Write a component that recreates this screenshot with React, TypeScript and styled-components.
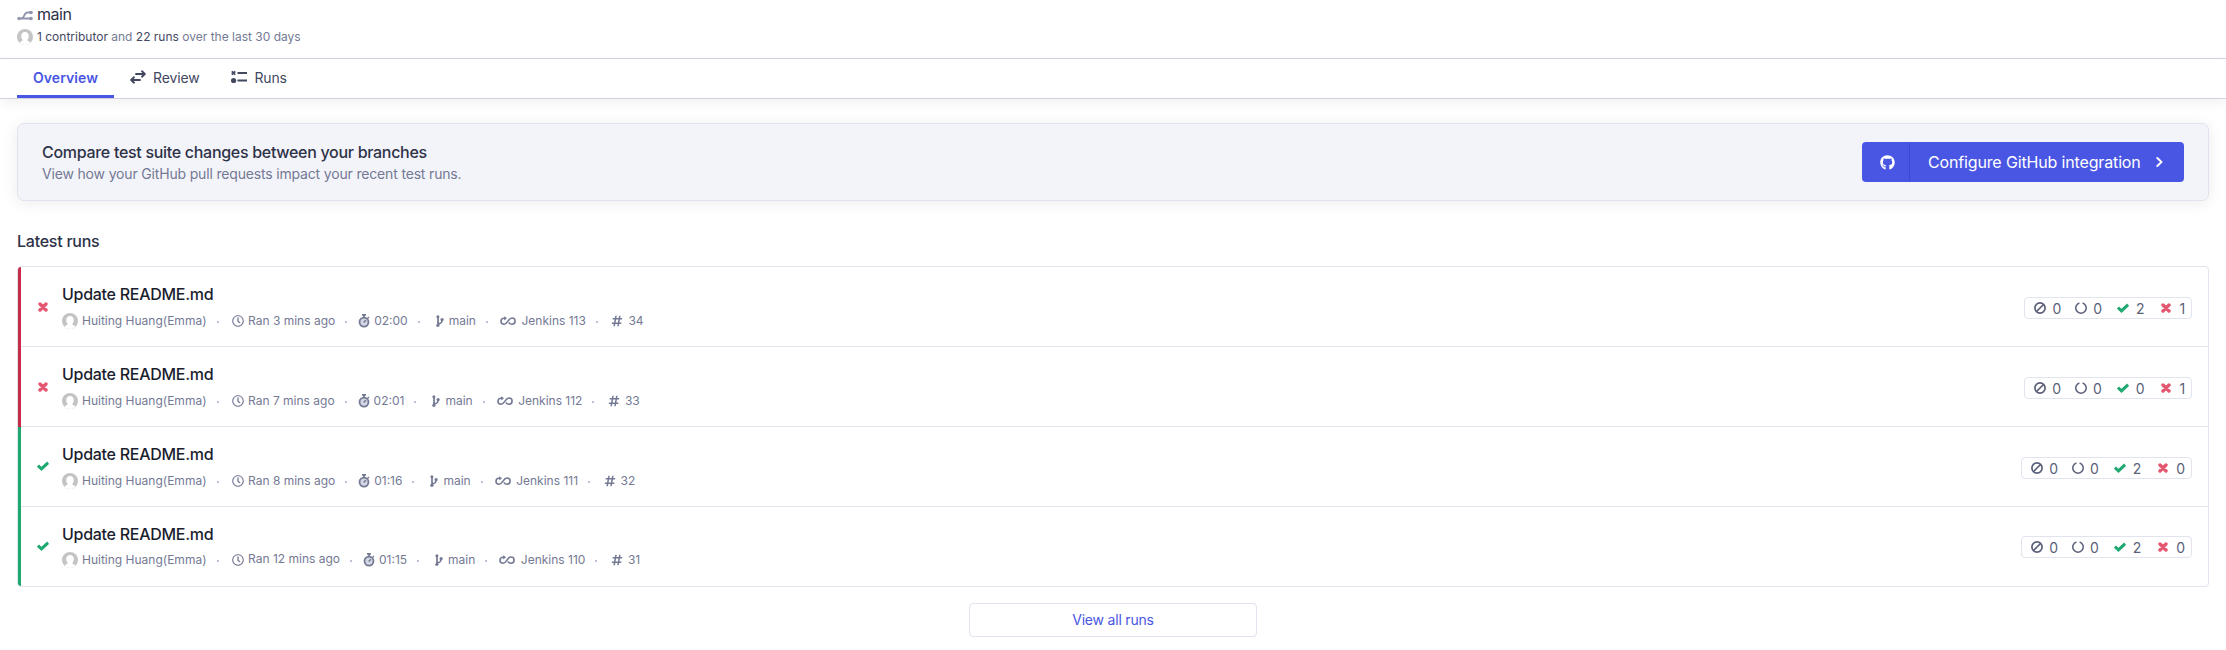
import React from "react";
import styled, { createGlobalStyle } from "styled-components";
import { FaRegClock, FaHashtag, FaGithub } from "react-icons/fa";

const GlobalStyle = createGlobalStyle`
  *, *::before, *::after { box-sizing: border-box; }
  body {
    margin: 0;
    background: #fff;
    color: #2e3247;
    font-family: Inter, "Liberation Sans", sans-serif;
    font-size: 14px;
  }
  svg { display: block; flex: none; }
`;

const Page = styled.div`
  min-height: 650px;
  overflow: hidden;
`;

const Header = styled.header`
  height: 59px;
  padding: 4px 17px 0;
  border-bottom: 1px solid #d0d2e0;
`;

const BranchTitle = styled.h1`
  display: flex;
  align-items: center;
  gap: 4px;
  margin: 0;
  height: 20px;
  font-size: 16px;
  font-weight: 400;
  letter-spacing: -0.45px;
  color: #2e3247;
  svg { margin-top: 2px; }
`;

const Contributors = styled.div`
  display: flex;
  align-items: center;
  gap: 4px;
  height: 25px;
  font-size: 12px;
  color: #747994;
  strong { font-weight: 400; color: #434861; }
`;

const Tabs = styled.nav`
  display: flex;
  height: 40px;
  padding-left: 17px;
  border-bottom: 1px solid #d0d2e0;
  box-shadow: 0 4px 12px rgba(0, 0, 0, 0.06);
`;

const Tab = styled.a<{ $active?: boolean }>`
  display: flex;
  align-items: center;
  gap: 7px;
  height: 39px;
  padding: 0 16px 3px;
  font-size: 14px;
  letter-spacing: ${(p) => (p.$active ? 0.07 : -0.15)}px;
  font-weight: ${(p) => (p.$active ? 600 : 400)};
  color: ${(p) => (p.$active ? "#4956e3" : "#434861")};
  box-shadow: ${(p) => (p.$active ? "inset 0 -3px #4956e3" : "none")};
`;

const Content = styled.main`
  padding: 24px 17px 0;
`;

const Banner = styled.section`
  display: flex;
  align-items: center;
  justify-content: space-between;
  height: 78px;
  padding: 0 24px;
  border: 1px solid #e1e3ed;
  border-radius: 7px;
  background: #f3f4fa;
  box-shadow: 0 2px 16px rgba(0, 0, 0, 0.08);
`;

const BannerTitle = styled.h2`
  margin: 0;
  font-size: 16px;
  line-height: 22px;
  font-weight: 500;
  letter-spacing: -0.3px;
  color: #2e3247;
`;

const BannerText = styled.p`
  margin: 0;
  font-size: 14px;
  line-height: 21px;
  letter-spacing: -0.17px;
  color: #747994;
`;

const ConfigureButton = styled.button`
  display: flex;
  align-items: center;
  width: 322px;
  height: 40px;
  padding: 0;
  border: 0;
  border-radius: 4px;
  background: #4956e3;
  color: #fff;
  font: 400 16px Inter, "Liberation Sans", sans-serif;
  letter-spacing: -0.15px;
`;

const ButtonIcon = styled.span`
  display: grid;
  place-items: center;
  width: 48px;
  height: 38px;
  padding-left: 3px;
  border-right: 1px solid #3b48cf;
`;

const ButtonLabel = styled.span`
  display: flex;
  flex: 1;
  align-items: center;
  justify-content: space-between;
  padding: 0 21px 0 18px;
`;

const SectionTitle = styled.h2`
  margin: 29px 0 0;
  height: 36px;
  font-size: 16px;
  line-height: 22px;
  font-weight: 500;
  letter-spacing: -0.25px;
  color: #2e3247;
`;

const RunList = styled.div`
  height: 321px;
  border: 1px solid #e1e3ed;
  border-radius: 4px;
  overflow: hidden;
`;

const RunRow = styled.article<{ $failed: boolean; $last: boolean }>`
  display: flex;
  align-items: flex-start;
  height: 80px;
  border-left: 3px solid ${(p) => (p.$failed ? "#c62b49" : "#1fa971")};
  padding-right: 16px;
  box-shadow: ${(p) => (p.$last ? "none" : "inset 0 -1px #e1e3ed")};
`;

const RunStatus = styled.span<{ $failed: boolean }>`
  display: grid;
  justify-items: center;
  width: 41px;
  padding: ${(p) => (p.$failed ? "35px" : "34px")} 0 0 3px;
`;

const RunBody = styled.div`
  flex: 1;
  padding-top: 15px;
`;

const RunTitle = styled.h3`
  margin: 0;
  height: 24px;
  line-height: 24px;
  font-size: 16px;
  font-weight: 500;
  letter-spacing: -0.28px;
  color: #1b1e2e;
`;

const Meta = styled.div<{ $last: boolean }>`
  display: flex;
  align-items: center;
  height: 20px;
  margin-top: ${(p) => (p.$last ? 4 : 5)}px;
  font-size: 12px;
  line-height: 20px;
  color: #747994;
`;

const MetaItem = styled.span<{ $gap: number; $lift?: number }>`
  display: flex;
  align-items: center;
  gap: ${(p) => p.$gap}px;
  span { margin-top: ${(p) => -2 * (p.$lift ?? 0)}px; }
`;

const Dot = styled.i<{ $after: number }>`
  width: 2px;
  height: 2px;
  margin: 1px ${(p) => p.$after}px 0 10px;
  border-radius: 50%;
  background: #a9adc4;
`;

const Stats = styled.div<{ $last: boolean }>`
  display: flex;
  align-items: center;
  height: 22px;
  margin-top: ${(p) => (p.$last ? 29 : 30)}px;
  padding: 0 6px 0 9px;
  border: 1px solid #e1e3ed;
  border-radius: 4px;
  font-size: 14px;
  letter-spacing: -0.1px;
  color: #5a5f7a;
`;

const Stat = styled.span<{ $gap: number; $before?: number }>`
  display: flex;
  align-items: center;
  gap: ${(p) => p.$gap}px;
  margin-left: ${(p) => p.$before ?? 0}px;
`;

const ViewAll = styled.button`
  display: block;
  width: 288px;
  height: 34px;
  margin: 16px auto 0;
  padding: 0 0 1px;
  border: 1px solid #e1e3ed;
  border-radius: 4px;
  background: #fff;
  color: #4956e3;
  font: 400 14px Inter, "Liberation Sans", sans-serif;
  letter-spacing: -0.2px;
`;

const Avatar = () => (
  <svg width="16" height="16" viewBox="0 0 16 16">
    <defs>
      <clipPath id="avatar-clip"><circle cx="8" cy="8" r="8" /></clipPath>
    </defs>
    <g clipPath="url(#avatar-clip)">
      <rect width="16" height="16" fill="#c4c4c4" />
      <path d="M8 3c2.400 0 3.800 1.700 3.800 4.100 0 1.600-.6 3-1.600 3.900.3 1 2.600 1.300 3.600 2.900V16H2.200v-2.100c1-1.600 3.300-1.900 3.600-2.900-1-.9-1.600-2.300-1.600-3.900C4.200 4.700 5.600 3 8 3z" fill="#fff" />
    </g>
  </svg>
);

const Cross = () => (
  <svg width="10" height="10" viewBox="0 0 10 10" stroke="#e45770" strokeWidth="3.400" strokeLinecap="round">
    <path d="m2 2 6 6m0-6L2 8" />
  </svg>
);

const Check = () => (
  <svg width="12" height="10" viewBox="0 0 12 10" fill="none" stroke="#1fa971" strokeWidth="3">
    <path d="m.9 4.500 3.600 3.400 6.600-6.200" />
  </svg>
);

const Skipped = () => (
  <svg width="12" height="12" viewBox="0 0 12 12" fill="none" stroke="currentColor" strokeWidth="1.700">
    <circle cx="6" cy="6" r="5.100" />
    <path d="M2.500 9.500l7-7" />
  </svg>
);

const BranchWide = () => (
  <svg width="16" height="12" viewBox="0 0 16 12" fill="none" stroke="#9095ad" strokeWidth="1.900">
    <path d="M2 9.500h12M4 9.500c4 0 2.500-6 6.500-6H14" />
    <circle cx="2" cy="9.500" r="1.700" fill="#9095ad" stroke="none" />
    <circle cx="14" cy="9.500" r="1.800" fill="#9095ad" stroke="none" />
    <circle cx="14" cy="3.500" r="1.800" fill="#9095ad" stroke="none" />
  </svg>
);

const ReviewIcon = () => (
  <svg width="16" height="14" viewBox="0 0 16 14" fill="none" stroke="#434861" strokeWidth="1.900" strokeLinecap="round" strokeLinejoin="round">
    <path d="M6 4h8.500M12 1.300 14.800 4 12 6.700M10 10H1.500M4 7.300 1.200 10 4 12.700" />
  </svg>
);

const RunsIcon = () => (
  <svg width="16" height="14" viewBox="0 0 16 14" fill="none" stroke="#434861" strokeWidth="1.800">
    <path d="m.8 1.300 3.400 3.400m0-3.400L.8 4.700" />
    <path d="M6.500 3H16M6.500 10.500H16" />
    <circle cx="2.600" cy="10.500" r="2.600" fill="#434861" stroke="none" />
  </svg>
);

const Stopwatch = () => (
  <svg width="12" height="14" viewBox="0 0 12 14">
    <path d="M4 .8h4M6 1v2.500M9.800 3.200l1 1" stroke="#747994" strokeWidth="1.700" fill="none" />
    <circle cx="6" cy="8.100" r="4.500" fill="#d3d6e3" stroke="#747994" strokeWidth="1.800" />
    <path d="m5.600 8.500 2.300-2.300" stroke="#747994" strokeWidth="1.500" />
  </svg>
);

const Branch = () => (
  <svg width="8" height="12" viewBox="0 0 8 12" fill="none" stroke="#747994" strokeWidth="1.700">
    <path d="M2 1v10M2 8.800c3.600 0 4-1.600 4-4.300" />
    <g fill="#747994" stroke="none">
      <circle cx="1.900" cy="1.700" r="1.500" />
      <circle cx="1.900" cy="10.300" r="1.600" />
      <circle cx="6.100" cy="4.600" r="1.600" />
    </g>
  </svg>
);

const Infinity = () => (
  <svg width="16" height="10" viewBox="0 0 16 10" fill="none" stroke="#747994" strokeWidth="1.600">
    <path d="M5.500 2.200H4a3 3 0 0 0 0 6c4 0 4-6.200 8-6.200a3.100 3.100 0 0 1 0 6.200c-1.500 0-2.400-.8-3.200-1.800" />
    <path d="M4.200.2 7 2.300 4.200 4.500z" fill="#747994" stroke="none" />
  </svg>
);

const Pending = () => (
  <svg width="12" height="12" viewBox="0 0 12 12" fill="none" stroke="currentColor" strokeWidth="1.500">
    <path d="M7.600 1a5.200 5.200 0 1 1-3.200 0" />
  </svg>
);

const Chevron = () => (
  <svg width="7" height="10" viewBox="0 0 7 10" fill="none" stroke="#fff" strokeWidth="1.900" strokeLinecap="round" strokeLinejoin="round">
    <path d="m1.300 1 4.200 4-4.200 4" />
  </svg>
);

const runs = [
  { failed: true, ago: "3 mins", time: "02:00", build: 113, num: 34, passed: 2, failures: 1 },
  { failed: true, ago: "7 mins", time: "02:01", build: 112, num: 33, passed: 0, failures: 1 },
  { failed: false, ago: "8 mins", time: "01:16", build: 111, num: 32, passed: 2, failures: 0 },
  { failed: false, ago: "12 mins", time: "01:15", build: 110, num: 31, passed: 2, failures: 0 },
];

export default function App() {
  return (
    <Page>
      <GlobalStyle />
      <Header>
        <BranchTitle><BranchWide />main</BranchTitle>
        <Contributors>
          <Avatar />
          <span><strong>1 contributor</strong> and <strong>22 runs</strong> over the last 30 days</span>
        </Contributors>
      </Header>
      <Tabs>
        <Tab $active>Overview</Tab>
        <Tab><ReviewIcon />Review</Tab>
        <Tab><RunsIcon />Runs</Tab>
      </Tabs>
      <Content>
        <Banner>
          <div>
            <BannerTitle>Compare test suite changes between your branches</BannerTitle>
            <BannerText>View how your GitHub pull requests impact your recent test runs.</BannerText>
          </div>
          <ConfigureButton>
            <ButtonIcon><FaGithub size={15} /></ButtonIcon>
            <ButtonLabel>Configure GitHub integration<Chevron /></ButtonLabel>
          </ConfigureButton>
        </Banner>
        <SectionTitle>Latest runs</SectionTitle>
        <RunList>
          {runs.map((run, i) => {
            const last = i === runs.length - 1;
            return (
              <RunRow key={run.num} $failed={run.failed} $last={last}>
                <RunStatus $failed={run.failed}>
                  {run.failed ? <Cross /> : <Check />}
                </RunStatus>
                <RunBody>
                  <RunTitle>Update README.md</RunTitle>
                  <Meta $last={last}>
                    <MetaItem $gap={4}><Avatar /><span>Huiting Huang(Emma)</span></MetaItem>
                    <Dot $after={13.5} />
                    <MetaItem $gap={4} $lift={last ? 1 : 0}><FaRegClock size={12} /><span>Ran {run.ago} ago</span></MetaItem>
                    <Dot $after={11} />
                    <MetaItem $gap={4}><Stopwatch /><span>{run.time}</span></MetaItem>
                    <Dot $after={16} />
                    <MetaItem $gap={5}><Branch /><span>main</span></MetaItem>
                    <Dot $after={12} />
                    <MetaItem $gap={5.5}><Infinity /><span>Jenkins {run.build}</span></MetaItem>
                    <Dot $after={13.5} />
                    <MetaItem $gap={5}><FaHashtag size={12} /><span>{run.num}</span></MetaItem>
                  </Meta>
                </RunBody>
                <Stats $last={last}>
                  <Stat $gap={6}><Skipped />0</Stat>
                  <Stat $gap={6} $before={14}><Pending />0</Stat>
                  <Stat $gap={7} $before={15}><Check />{run.passed}</Stat>
                  <Stat $gap={8.5} $before={16.5}><Cross />{run.failures}</Stat>
                </Stats>
              </RunRow>
            );
          })}
        </RunList>
        <ViewAll>View all runs</ViewAll>
      </Content>
    </Page>
  );
}
